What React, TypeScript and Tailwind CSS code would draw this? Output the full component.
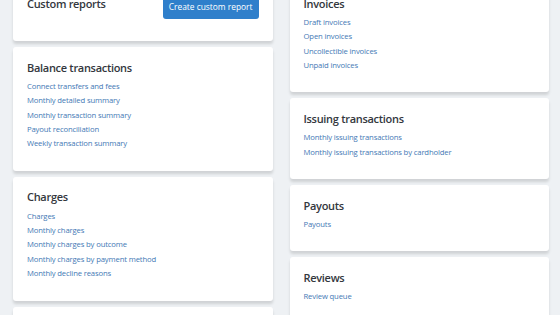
const sections: { title: string; links: string[] }[][] = [
  [
    { title: "Balance transactions", links: ["Connect transfers and fees", "Monthly detailed summary", "Monthly transaction summary", "Payout reconciliation", "Weekly transaction summary"] },
    { title: "Charges", links: ["Charges", "Monthly charges", "Monthly charges by outcome", "Monthly charges by payment method", "Monthly decline reasons"] },
    { title: "Customers", links: ["Customers"] },
  ],
  [
    { title: "Invoices", links: ["Draft invoices", "Open invoices", "Uncollectible invoices", "Unpaid invoices"] },
    { title: "Issuing transactions", links: ["Monthly issuing transactions", "Monthly issuing transactions by cardholder"] },
    { title: "Payouts", links: ["Payouts"] },
    { title: "Reviews", links: ["Review queue"] },
  ],
];

const Card = ({ title, links }: { title: string; links: string[] }) => (
  <div className="bg-white rounded-[3px] shadow-[0_3px_3px_rgba(0,0,0,0.13)] px-[14px] pt-[12.5px] pb-[20px]">
    <h3 className="text-[11px] leading-[16px] tracking-[-0.3px] font-semibold text-[#33373d]">{title}</h3>
    <ul className="mt-[3.3px]">
      {links.map((l) => (
        <li key={l} className="text-[7.7px] leading-[14.4px] tracking-[-0.15px] text-[#4479b5]">
          {l}
        </li>
      ))}
    </ul>
  </div>
);

export default function App() {
  return (
    <div className="h-[315px] w-[560px] overflow-hidden bg-[#eef1f4]" style={{ fontFamily: '"Open Sans", sans-serif' }}>
      <div className="grid grid-cols-2 gap-x-[17px] pl-[13px] pr-[11px] -mt-[17px]">
        <div className="flex flex-col gap-[6px]">
          <div className="bg-white rounded-[3px] shadow-[0_3px_3px_rgba(0,0,0,0.13)] px-[14px] pt-[12.5px] pb-[22px] flex justify-between items-start">
            <h3 className="text-[11px] leading-[16px] tracking-[-0.3px] font-semibold text-[#33373d]">Custom reports</h3>
            <button className="h-[23.5px] px-[6px] rounded-[3px] bg-[#2f7fcb] text-white text-[8.4px]">
              Create custom report
            </button>
          </div>
          {sections[0].map((s) => (
            <Card key={s.title} {...s} />
          ))}
        </div>
        <div className="flex flex-col gap-[6px]">
          {sections[1].map((s) => (
            <Card key={s.title} {...s} />
          ))}
        </div>
      </div>
    </div>
  );
}
